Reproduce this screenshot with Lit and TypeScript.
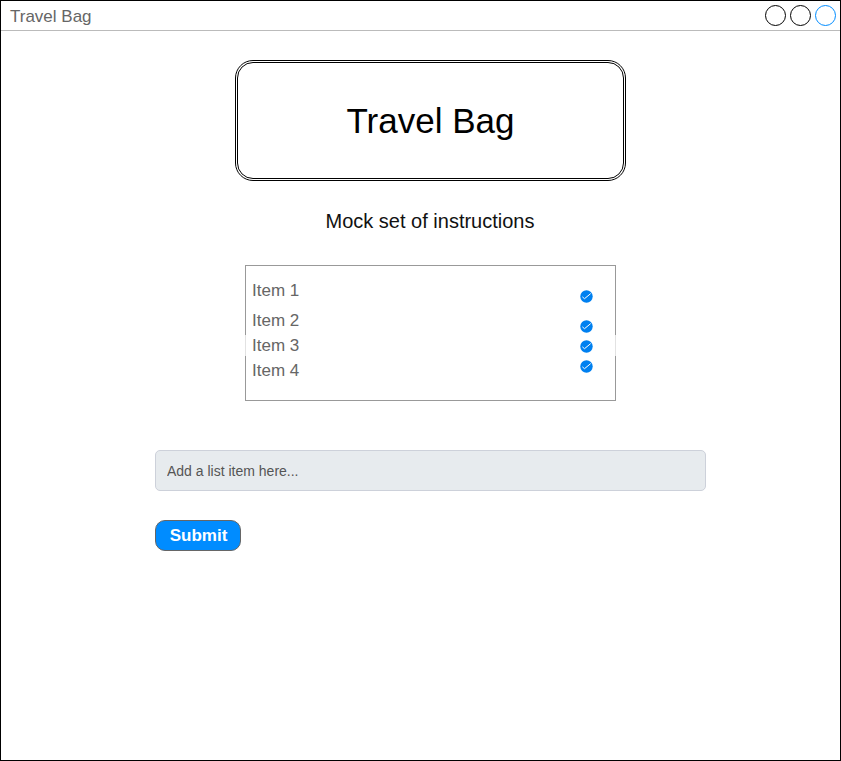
import { LitElement, html, css } from "lit";
import { customElement } from "lit/decorators.js";

@customElement("check-badge")
export class CheckBadge extends LitElement {
  static styles = css`
    :host { display: block; width: 13px; height: 13px; }
    svg { display: block; }
  `;
  render() {
    return html`<svg width="13" height="13" viewBox="0 0 13 13">
      <circle cx="6.5" cy="6.5" r="6.2" fill="#0080f0" />
      <path d="M2.4 6.9 L4.5 8.7 L10.7 3.6" fill="none" stroke="#fff" stroke-width="1" />
    </svg>`;
  }
}

@customElement("app-root")
export class AppRoot extends LitElement {
  static styles = css`
    :host {
      display: flex; flex-direction: column; box-sizing: border-box;
      width: 841px; height: 761px; border: 1px solid #000; background: #fff;
      font-family: "Liberation Sans", Arial, sans-serif; color: #666;
    }
    * { box-sizing: border-box; }
    .bar {
      display: flex; align-items: center; justify-content: space-between;
      height: 30px; padding: 0 4px 0 9px; border-bottom: 1px solid #bbb; font-size: 17px;
    }
    .bar-title { padding-top: 2px; }
    .dots { display: flex; gap: 4px; }
    .dot { width: 21px; height: 21px; border: 1px solid #000; border-radius: 50%; }
    .dot.active { border-color: #008cff; }
    .title {
      width: 391px; height: 121px; margin: 29px 0 0 234px; border: 3px double #000;
      border-radius: 18px; color: #000; font-size: 35px; font-weight: 400;
      display: flex; align-items: center; justify-content: center;
    }
    .intro {
      margin: 28px 0 0 324.5px; height: 24px; line-height: 24px; font-size: 20px;
      color: #111; white-space: nowrap;
    }
    .list {
      display: flex; justify-content: space-between; position: relative;
      width: 371px; height: 136px; margin: 32px 0 0 244px; padding: 0 22px 0 6px;
      border: 1px solid #999; font-size: 17px;
    }
    .list::before, .list::after {
      content: ""; position: absolute; top: 69px; height: 21px; width: 1px; background: #e2e2e2;
    }
    .list::before { left: -1px; }
    .list::after { right: -1px; }
    .names { margin: 12px 0 0; padding: 0; list-style: none; }
    .names li { height: 25px; line-height: 25px; }
    .names li:first-child { margin-bottom: 5px; }
    .checks { display: flex; flex-direction: column; gap: 7px; padding-top: 24px; }
    .checks check-badge:first-child { margin-bottom: 10px; }
    .field {
      display: block; width: 551px; height: 41px; margin: 49px 0 0 154px; padding: 1px 11px 0;
      border: 1px solid #cdd1da; border-radius: 5px; background: #e7ebee;
      font: 14px "Liberation Sans", Arial, sans-serif; color: #555;
    }
    .field::placeholder { color: #555; opacity: 1; }
    .submit {
      width: 86px; height: 31px; margin: 29px 0 0 154px; padding: 0 0 0 1px;
      border: 1px solid #666; border-radius: 10px; background: #008cff; color: #fff;
      font: bold 17px "Liberation Sans", Arial, sans-serif;
    }
  `;

  private items = ["Item 1", "Item 2", "Item 3", "Item 4"];

  render() {
    return html`
      <header class="bar">
        <span class="bar-title">Travel Bag</span>
        <div class="dots">
          <span class="dot"></span><span class="dot"></span><span class="dot active"></span>
        </div>
      </header>
      <h1 class="title">Travel Bag</h1>
      <div class="intro">Mock set of instructions</div>
      <section class="list">
        <ul class="names">${this.items.map((item) => html`<li>${item}</li>`)}</ul>
        <div class="checks">${this.items.map(() => html`<check-badge></check-badge>`)}</div>
      </section>
      <input class="field" placeholder="Add a list item here..." />
      <button class="submit">Submit</button>
    `;
  }
}
